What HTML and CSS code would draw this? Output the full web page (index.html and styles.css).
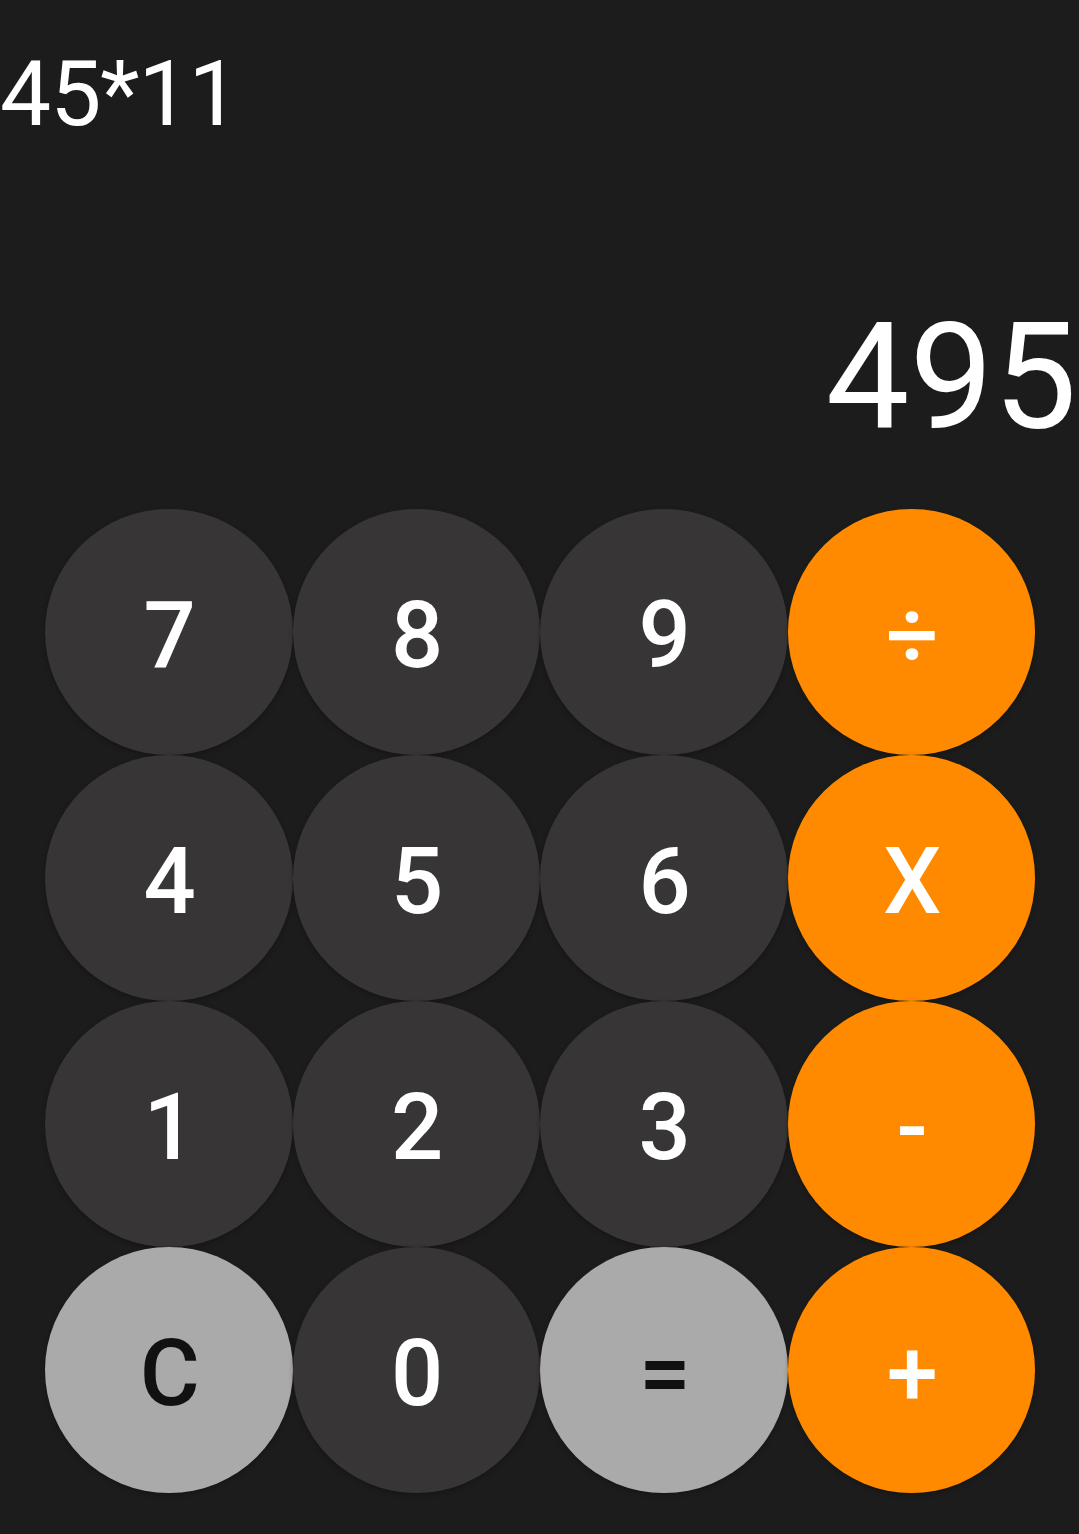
FILE: index.html
```html
<!DOCTYPE html>
<html>
<head>
<meta charset="utf-8">
<link rel="stylesheet" href="styles.css">
</head>
<body>
<div class="calc">
  <div class="expr">45*11</div>
  <div class="result">495</div>
  <div class="keys">
    <div class="key dark">7</div>
    <div class="key dark">8</div>
    <div class="key dark">9</div>
    <div class="key orange">÷</div>
    <div class="key dark">4</div>
    <div class="key dark">5</div>
    <div class="key dark">6</div>
    <div class="key orange">X</div>
    <div class="key dark">1</div>
    <div class="key dark">2</div>
    <div class="key dark">3</div>
    <div class="key orange">-</div>
    <div class="key light">C</div>
    <div class="key dark">0</div>
    <div class="key light">=</div>
    <div class="key orange">+</div>
  </div>
</div>
</body>
</html>
```
FILE: styles.css
```css
html, body {
  margin: 0;
  padding: 0;
  background: #1c1c1c;
}
body {
  width: 1079px;
  height: 1534px;
  overflow: hidden;
  font-family: Roboto, "Liberation Sans", sans-serif;
}
.calc {
  display: flex;
  flex-direction: column;
}
.expr {
  color: #ffffff;
  font-size: 91px;
  line-height: 92px;
  padding-top: 48px;
  padding-left: 0;
  font-weight: 400;
  letter-spacing: -1px;
}
.result {
  color: #ffffff;
  font-size: 149px;
  line-height: 149px;
  margin-top: 163px;
  text-align: right;
  font-weight: 400;
  padding-right: 2px;
}
.keys {
  margin-top: 57px;
  padding-left: 45px;
  display: grid;
  grid-template-columns: repeat(4, 247.5px);
  grid-auto-rows: 246px;
}
.key {
  border-radius: 50%;
  display: flex;
  align-items: center;
  justify-content: center;
  font-size: 92px;
  font-weight: 500;
  padding-top: 6px;
  padding-left: 2px;
  box-sizing: border-box;
  color: #ffffff;
  box-shadow: 0 2px 5px rgba(0, 0, 0, 0.25);
}
.dark {
  background: #373536;
}
.orange {
  background: #ff8a00;
}
.light {
  background: #aaaaaa;
  color: #111111;
}
```
